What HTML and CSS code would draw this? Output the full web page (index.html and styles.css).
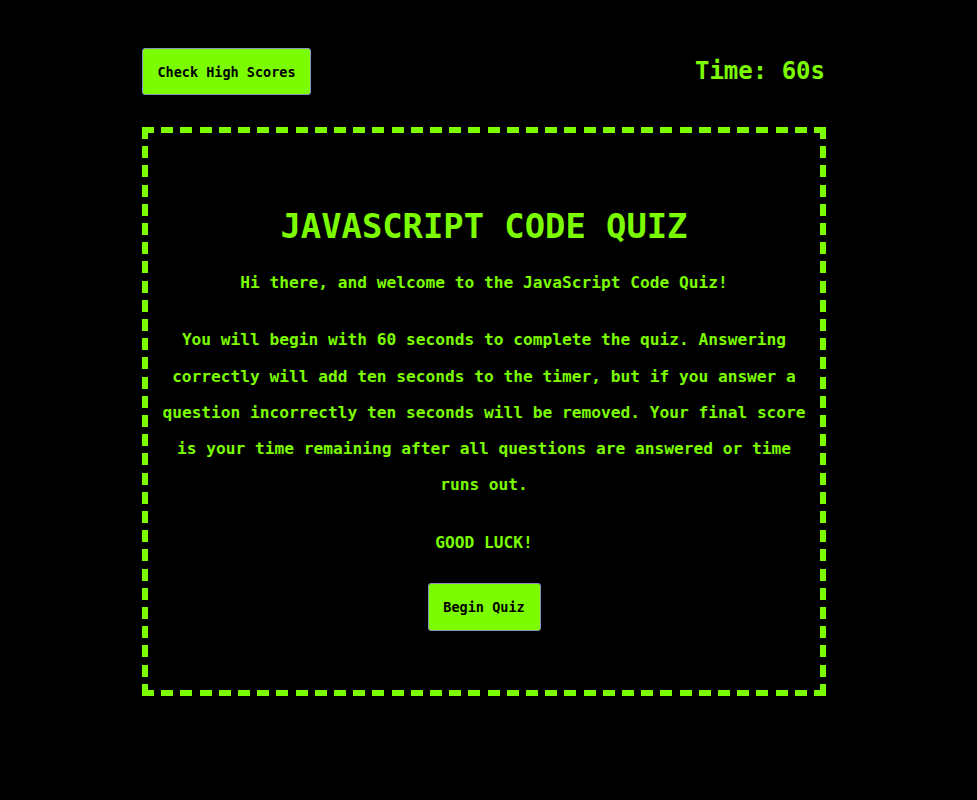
FILE: index.html
```html
<!DOCTYPE html>
<html lang="en">
<head>
<meta charset="utf-8">
<title>JavaScript Code Quiz</title>
<link rel="stylesheet" href="styles.css">
</head>
<body>
  <div class="page">
    <header class="topbar">
      <button class="btn btn-scores">Check High Scores</button>
      <div class="timer">Time: 60s</div>
    </header>
    <main class="quiz-box">
      <h1 class="title">JAVASCRIPT CODE QUIZ</h1>
      <p class="text">Hi there, and welcome to the JavaScript Code Quiz!</p>
      <p class="text rules">You will begin with 60 seconds to complete the quiz. Answering correctly will add ten seconds to the timer, but if you answer a question incorrectly ten seconds will be removed. Your final score is your time remaining after all questions are answered or time runs out.</p>
      <p class="text">GOOD LUCK!</p>
      <button class="btn btn-begin">Begin Quiz</button>
    </main>
  </div>
</body>
</html>
```
FILE: styles.css
```css
html, body {
  margin: 0;
  padding: 0;
  background: #000;
}
body {
  font-family: "DejaVu Sans Mono", "Liberation Mono", monospace;
  color: #7cfc00;
  height: 800px;
  overflow: hidden;
}
.page {
  width: 684px;
  margin-left: 142px;
  padding-top: 48px;
}
.topbar {
  display: flex;
  justify-content: space-between;
  align-items: center;
  height: 47px;
}
.btn {
  background: #7cfc00;
  color: #000;
  border: 1px solid #8a8fc0;
  border-radius: 3px;
  font-family: "DejaVu Sans Mono", "Liberation Mono", monospace;
  font-weight: bold;
  font-size: 13.5px;
  padding: 0;
  cursor: pointer;
}
.btn-scores {
  width: 169px;
  height: 47px;
}
.timer {
  font-size: 24px;
  font-weight: bold;
  margin-right: 1px;
  margin-top: -1px;
}
.quiz-box {
  margin-top: 32px;
  box-sizing: border-box;
  height: 569px;
  padding: 80px 18px 0;
  display: flex;
  flex-direction: column;
  align-items: center;
  text-align: center;
  background:
    repeating-linear-gradient(90deg, #7cfc00 0 12px, transparent 12px 19.2px) left top / 100% 6px no-repeat,
    repeating-linear-gradient(90deg, #7cfc00 0 12px, transparent 12px 19.2px) left bottom / 100% 6px no-repeat,
    repeating-linear-gradient(180deg, #7cfc00 0 12px, transparent 12px 19.2px) left top / 6px 100% no-repeat,
    repeating-linear-gradient(180deg, #7cfc00 0 12px, transparent 12px 19.2px) right top / 6px 100% no-repeat;
}
.title {
  margin: 0 0 18px;
  font-size: 33.8px;
  line-height: 40px;
  font-weight: bold;
}
.text {
  margin: 0 0 21px;
  font-size: 16.2px;
  line-height: 36.25px;
  font-weight: bold;
}
.rules {
  width: 650px;
}
.btn-begin {
  margin-top: 1px;
  width: 113px;
  height: 48px;
}
```
